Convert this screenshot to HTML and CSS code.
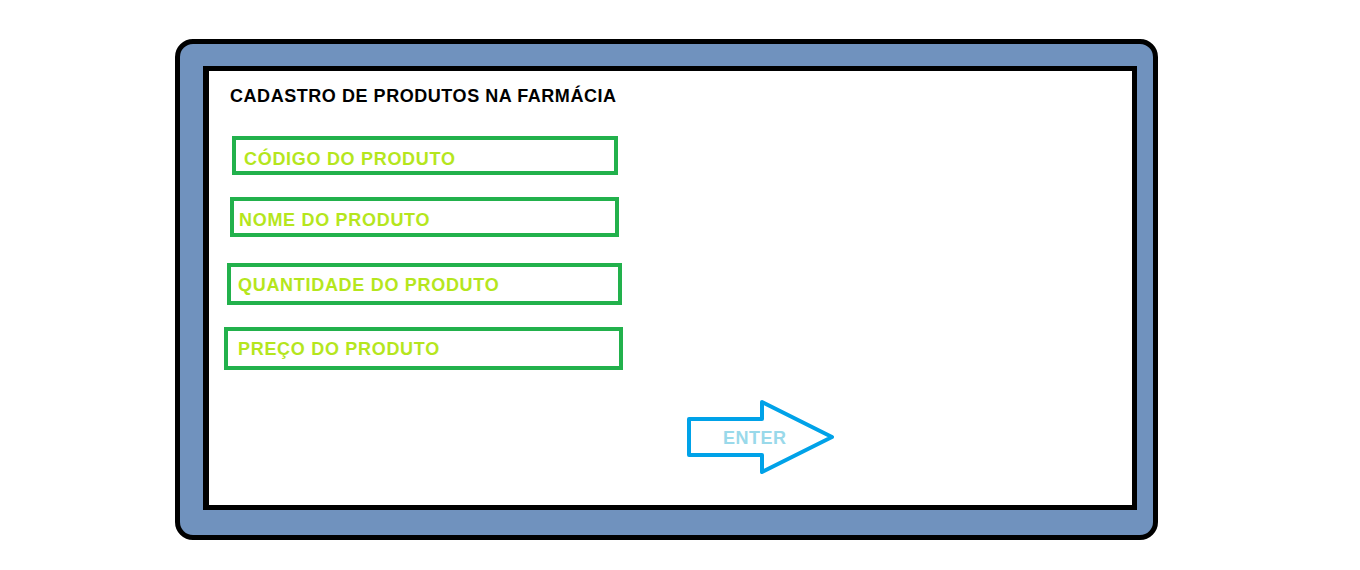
FILE: index.html
```html
<!DOCTYPE html>
<html lang="pt-BR">
<head>
  <meta charset="UTF-8" />
  <title>Cadastro de Produtos</title>
  <link rel="stylesheet" href="styles.css">
</head>
<body>
  <div class="frame">
    <div class="screen">
      <h1>CADASTRO DE PRODUTOS NA FARMÁCIA</h1>

      <form class="fields">
        <div class="field field-code">CÓDIGO DO PRODUTO</div>
        <div class="field field-name">NOME DO PRODUTO</div>
        <div class="field field-qty">QUANTIDADE DO PRODUTO</div>
        <div class="field field-price">PREÇO DO PRODUTO</div>
      </form>

      <button class="enter" type="button">
        <svg width="152" height="78" viewBox="0 0 152 78">
          <polygon points="3,21 76,21 76,4 146,39 76,74 76,57 3,57"
                   fill="none" stroke="#00a2e8" stroke-width="4" stroke-linejoin="round" />
        </svg>
        <span class="enter-label">ENTER</span>
      </button>
    </div>
  </div>
</body>
</html>
```

FILE: styles.css
```css
body {
  margin: 0;
  background: #fff;
  font-family: 'Liberation Sans', Arial, sans-serif;
}

.frame {
  box-sizing: border-box;
  width: 983px;
  height: 501px;
  margin: 39px 0 0 175px;
  padding: 22px 0 0 23px;
  background: #7092be;
  border: 5px solid #000;
  border-radius: 18px;
}

.screen {
  box-sizing: border-box;
  width: 934px;
  height: 444px;
  background: #fff;
  border: 6px solid #000;
  border-width: 5px 5px 5px 6px;
  padding: 15px 0 0 21px;
}

h1 {
  margin: 0;
  font-size: 18px;
  line-height: 20px;
  letter-spacing: 0.55px;
  font-weight: bold;
  color: #000;
}

.fields {
  display: flex;
  flex-direction: column;
  margin-left: -21px;
}

.field {
  box-sizing: border-box;
  border: 4px solid #22b14c;
  font-size: 18px;
  line-height: 20px;
  font-weight: bold;
  letter-spacing: 0.7px;
  color: #b5e61d;
}

.field-code {
  width: 386px;
  height: 39px;
  margin: 30px 0 0 23px;
  padding: 9px 0 0 8px;
}

.field-name {
  width: 389px;
  height: 40px;
  margin: 22px 0 0 21px;
  padding: 9px 0 0 5px;
}

.field-qty {
  width: 395px;
  height: 42px;
  margin: 26px 0 0 18px;
  padding: 8px 0 0 7px;
}

.field-price {
  width: 399px;
  height: 43px;
  margin: 22px 0 0 15px;
  padding: 8px 0 0 10px;
}

.enter {
  position: relative;
  display: block;
  width: 152px;
  height: 78px;
  margin: 28px 0 0 456px;
  padding: 0;
  border: none;
  background: none;
  cursor: pointer;
}

.enter svg {
  display: block;
}

.enter-label {
  position: absolute;
  left: 37px;
  top: 30px;
  font-family: 'Liberation Sans', Arial, sans-serif;
  font-size: 18px;
  line-height: 20px;
  font-weight: bold;
  letter-spacing: 0.5px;
  color: #99d9ea;
}
```
